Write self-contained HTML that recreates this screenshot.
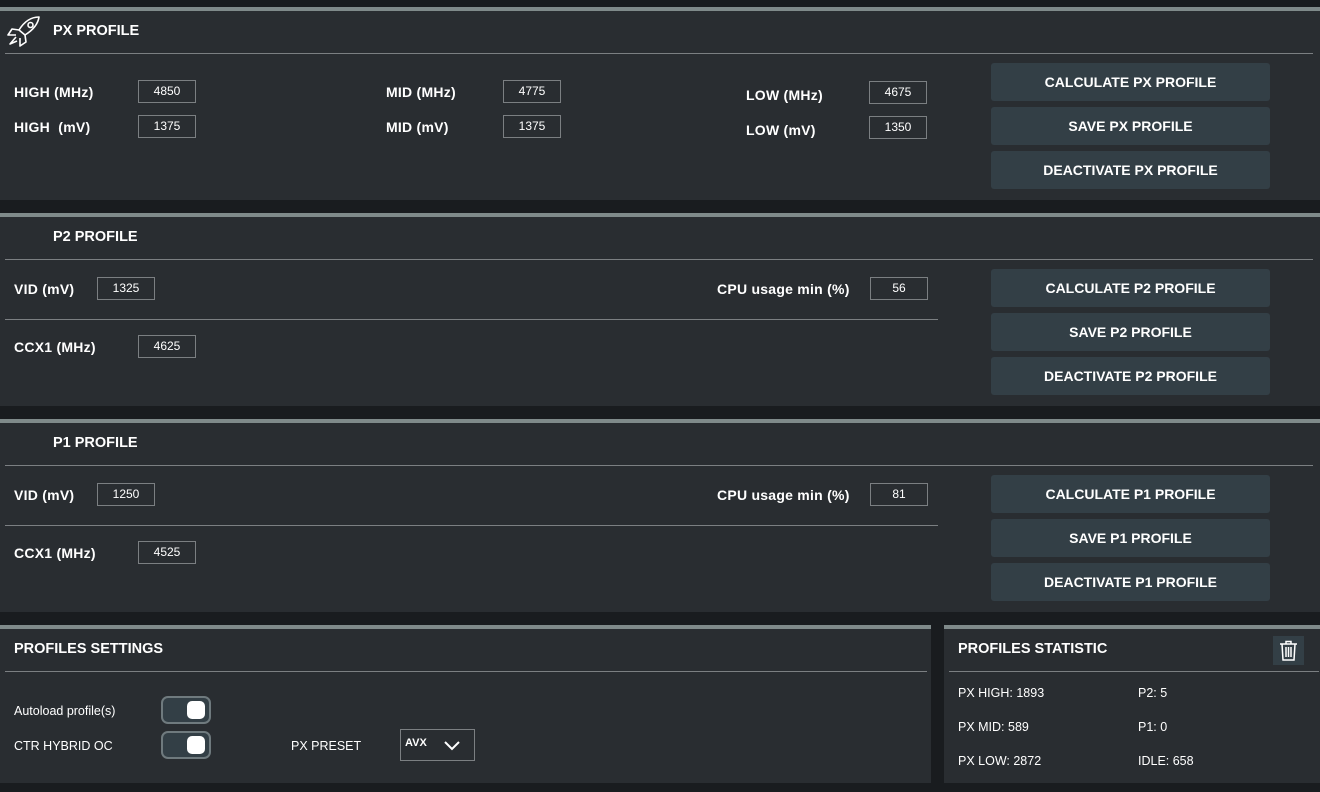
<!DOCTYPE html>
<html><head><style>
*{margin:0;padding:0;box-sizing:border-box}
body{width:1320px;height:792px;background:#191c1f;font-family:"Liberation Sans",sans-serif;color:#fff;position:relative;overflow:hidden}
.p{position:absolute;background:#292d31;border-top:4px solid #7f8a8a}
.a{position:absolute;white-space:nowrap}
.b{font-weight:bold;font-size:14px;letter-spacing:0.25px}
.t{font-weight:bold;font-size:14.5px}
.in{position:absolute;width:58px;height:23px;border:1px solid #7b7f82;font-size:12px;text-align:center;line-height:21px}
.ln{position:absolute;height:1px;background:#7b7f82}
.btn{position:absolute;left:991px;width:279px;height:38px;background:#333f46;border-radius:3px;font-weight:bold;font-size:14px;text-align:center;line-height:39px}
.s{font-size:12.5px}
.tg{position:absolute;left:161px;width:50px;height:28px;border:2px solid #6f7a7e;border-radius:7px;background:#333f46}
.tg:after{content:"";position:absolute;right:4px;top:3px;width:18px;height:18px;background:#fff;border-radius:5px}
</style></head><body>
<div class="p" style="left:0;top:7px;width:1320px;height:193px"></div>
<div class="p" style="left:0;top:213px;width:1320px;height:193px"></div>
<div class="p" style="left:0;top:419px;width:1320px;height:193px"></div>
<div class="p" style="left:0;top:625px;width:931px;height:158px"></div>
<div class="p" style="left:944px;top:625px;width:376px;height:158px"></div>

<svg class="a" style="left:7px;top:15px" width="34" height="32" viewBox="0 0 34 32" fill="none" stroke="#fff" stroke-width="1.6" stroke-linejoin="round"><path d="M32 2 C24 2 17 7 12 15 L18 20 C26 15 31 9 32 2Z"/><circle cx="23.5" cy="10" r="2.5"/><path d="M12 15 L5 14 L1 20 L9 20"/><path d="M18 20 L19 27 L13 31 L13 23"/><path d="M9 22 L3 29 L10 26"/></svg>
<div class="a t" style="left:53px;top:23px">PX PROFILE</div>
<div class="ln" style="left:5px;top:53px;width:1308px"></div>
<div class="a b" style="left:14px;top:84px">HIGH (MHz)</div>
<div class="a b" style="left:14px;top:119px">HIGH&nbsp; (mV)</div>
<div class="in" style="left:138px;top:80px">4850</div>
<div class="in" style="left:138px;top:115px">1375</div>
<div class="a b" style="left:386px;top:84px">MID (MHz)</div>
<div class="a b" style="left:386px;top:119px">MID (mV)</div>
<div class="in" style="left:503px;top:80px">4775</div>
<div class="in" style="left:503px;top:115px">1375</div>
<div class="a b" style="left:746px;top:87px">LOW (MHz)</div>
<div class="a b" style="left:746px;top:122px">LOW (mV)</div>
<div class="in" style="left:869px;top:81px">4675</div>
<div class="in" style="left:869px;top:116px">1350</div>
<div class="btn" style="top:63px">CALCULATE PX PROFILE</div>
<div class="btn" style="top:107px">SAVE PX PROFILE</div>
<div class="btn" style="top:151px">DEACTIVATE PX PROFILE</div>

<div class="a t" style="left:53px;top:229px">P2 PROFILE</div>
<div class="ln" style="left:5px;top:259px;width:1308px"></div>
<div class="a b" style="left:14px;top:281px">VID (mV)</div>
<div class="in" style="left:97px;top:277px">1325</div>
<div class="a b" style="left:717px;top:281px">CPU usage min (%)</div>
<div class="in" style="left:870px;top:277px">56</div>
<div class="ln" style="left:5px;top:319px;width:933px"></div>
<div class="a b" style="left:14px;top:339px">CCX1 (MHz)</div>
<div class="in" style="left:138px;top:335px">4625</div>
<div class="btn" style="top:269px">CALCULATE P2 PROFILE</div>
<div class="btn" style="top:313px">SAVE P2 PROFILE</div>
<div class="btn" style="top:357px">DEACTIVATE P2 PROFILE</div>

<div class="a t" style="left:53px;top:435px">P1 PROFILE</div>
<div class="ln" style="left:5px;top:465px;width:1308px"></div>
<div class="a b" style="left:14px;top:487px">VID (mV)</div>
<div class="in" style="left:97px;top:483px">1250</div>
<div class="a b" style="left:717px;top:487px">CPU usage min (%)</div>
<div class="in" style="left:870px;top:483px">81</div>
<div class="ln" style="left:5px;top:525px;width:933px"></div>
<div class="a b" style="left:14px;top:545px">CCX1 (MHz)</div>
<div class="in" style="left:138px;top:541px">4525</div>
<div class="btn" style="top:475px">CALCULATE P1 PROFILE</div>
<div class="btn" style="top:519px">SAVE P1 PROFILE</div>
<div class="btn" style="top:563px">DEACTIVATE P1 PROFILE</div>

<div class="a t" style="left:14px;top:641px">PROFILES SETTINGS</div>
<div class="ln" style="left:5px;top:671px;width:922px"></div>
<div class="a s" style="left:14px;top:704px">Autoload profile(s)</div>
<div class="tg" style="top:696px"></div>
<div class="a s" style="left:14px;top:739px">CTR HYBRID OC</div>
<div class="tg" style="top:731px"></div>
<div class="a s" style="left:291px;top:739px">PX PRESET</div>
<div class="a" style="left:400px;top:729px;width:75px;height:32px;border:1px solid #7b7f82"></div>
<div class="a" style="left:405px;top:737px;font-size:11px;font-weight:bold">AVX</div>
<svg class="a" style="left:443px;top:740px" width="18" height="12" viewBox="0 0 18 12"><path d="M2 2 L9 9 L16 2" stroke="#fff" stroke-width="2" fill="none"/></svg>

<div class="a t" style="left:958px;top:641px">PROFILES STATISTIC</div>
<div class="a" style="left:1273px;top:636px;width:31px;height:29px;background:#333f46"></div>
<svg class="a" style="left:1279px;top:640px" width="19" height="21" viewBox="0 0 19 21" fill="none" stroke="#fff" stroke-width="1.5"><path d="M1 4 H18 M7 4 V1.5 H12 V4 M3 4 L4 20 H15 L16 4 M7 7 V17 M9.5 7 V17 M12 7 V17"/></svg>
<div class="ln" style="left:949px;top:671px;width:370px"></div>
<div class="a s" style="left:958px;top:686px">PX HIGH: 1893</div>
<div class="a s" style="left:958px;top:720px">PX MID: 589</div>
<div class="a s" style="left:958px;top:754px">PX LOW: 2872</div>
<div class="a s" style="left:1138px;top:686px">P2: 5</div>
<div class="a s" style="left:1138px;top:720px">P1: 0</div>
<div class="a s" style="left:1138px;top:754px">IDLE: 658</div>
</body></html>
